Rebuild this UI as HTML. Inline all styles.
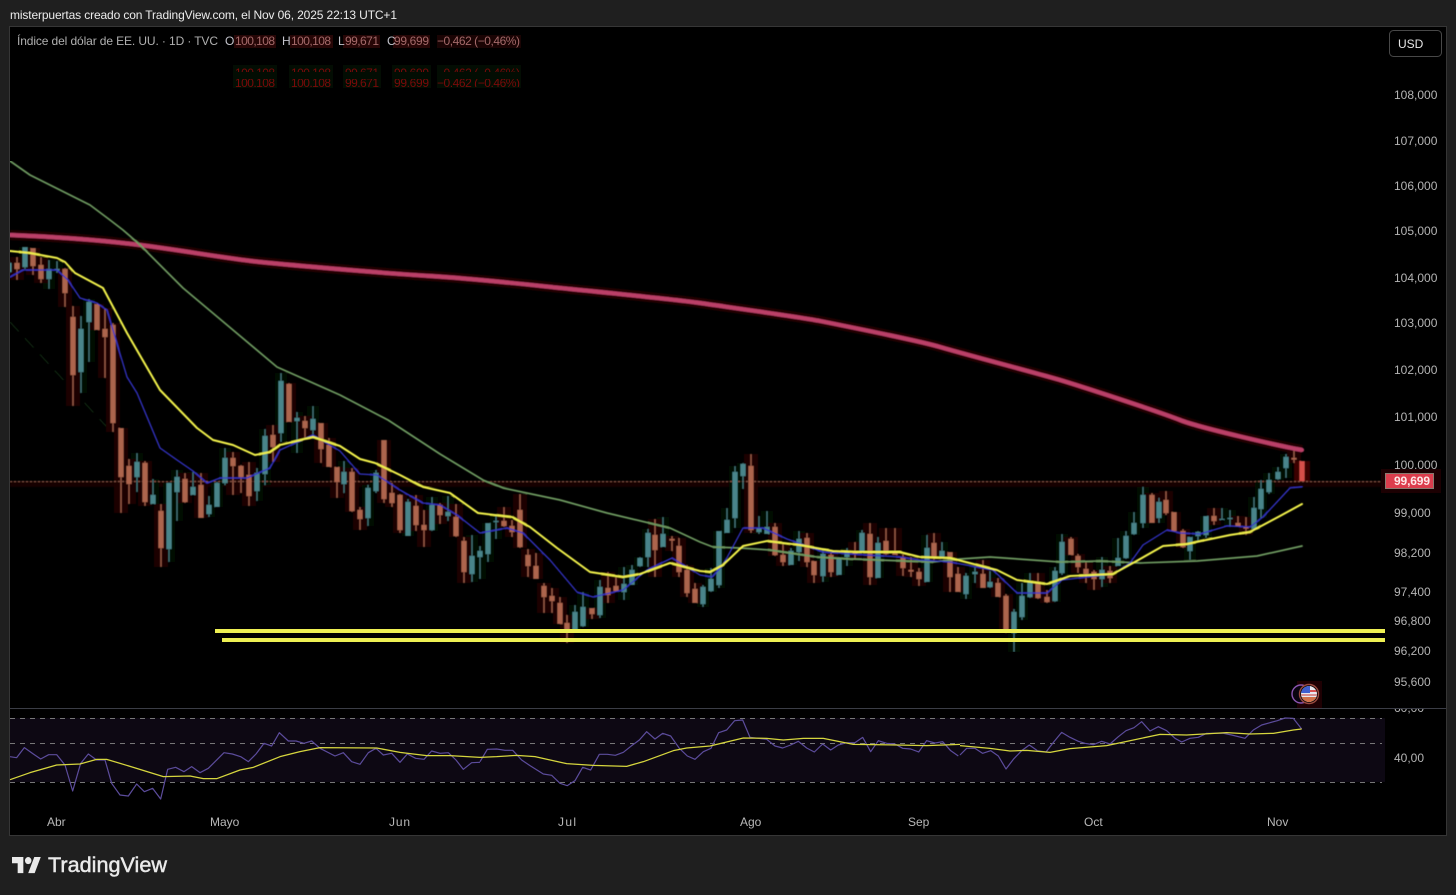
<!DOCTYPE html>
<html><head><meta charset="utf-8"><style>
html,body{margin:0;padding:0;background:#1f1f1f;width:1456px;height:895px;overflow:hidden}
svg{display:block}
text{font-family:"Liberation Sans",sans-serif;font-size:12px}
</style></head><body>
<svg width="1456" height="895" viewBox="0 0 1456 895" xmlns="http://www.w3.org/2000/svg">
<defs>
<filter id="soft" x="0" y="0" width="100%" height="100%" filterUnits="objectBoundingBox"><feGaussianBlur stdDeviation="0.45"/></filter>
<clipPath id="main"><rect x="10" y="27" width="1375" height="681"/></clipPath>
<clipPath id="g1"><rect x="230" y="64" width="300" height="8"/></clipPath>
<clipPath id="g2"><rect x="230" y="79" width="300" height="8"/></clipPath>
<clipPath id="rsiax"><rect x="1386" y="709" width="60" height="120"/></clipPath>
<clipPath id="flag"><circle cx="1309" cy="694" r="8"/></clipPath>
<path id="tw" d="M9 261V274M25 247V269M49 260V289M57 261V273M81 316V393M89 299V362M137 453V492M153 479V504M169 483V562M177 470V521M193 472V495M209 496V517M217 482V507M225 448V485M257 468V501M265 429V485M281 373V442M297 412V453M313 406V439M344 461V493M368 485V526M376 470V493M408 499V536M432 497V531M448 496V521M472 535V582M480 546V579M488 523V562M496 514V539M575 605V631M583 592V627M600 580V618M624 567V600M632 565V585M640 557V567M648 529V567M663 517V547M703 585V607M711 568V592M719 531V588M727 508V533M735 466V528M743 463V489M759 516V534M767 511V534M791 548V565M799 531V561M823 548V582M839 557V575M847 548V566M862 530V552M878 537V578M927 535V582M942 542V559M966 573V599M975 567V583M990 571V588M1014 609V652M1022 583V620M1030 573V598M1055 567V602M1062 534V575M1102 557V587M1118 538V566M1126 531V559M1134 512V535M1143 487V528M1159 498V523M1190 537V560M1198 531V542M1206 516V538M1222 508V520M1230 510V527M1254 497V530M1261 480V518M1269 473V494M1278 467V480M1286 454V478"/>
<path id="tb" d="M9 263V272M25 247V267M49 269V279M57 269V270.5M81 329V372M89 302V322M137 462V477M153 495V504M169 483V549M177 477V492M193 487V495M209 505V514M217 483V507M225 458V483M257 473V491M265 436V474M281 381V433M297 418V421M313 419V430M344 472V484M368 488V518M376 473V491M408 502V536M432 505V530M448 512V516M472 556V574M480 551V557M488 523V554M496 521V522M575 612V631M583 607V626M600 587V615M624 584V592M632 570V585M640 558V566M648 533V557M663 534V547M703 587V604M711 579V591M719 531V585M727 520V533M735 472V518M743 464V476M759 528V532M767 527V534M791 551V565M799 539V552M823 554V576M839 559V575M847 551V557M862 533V551M878 543V578M927 548V582M942 551V557M966 576V594M975 572V574M990 582V587M1014 612V633M1022 596V617M1030 582V597M1055 571V601M1062 542V573M1102 570V579M1118 558V566M1126 536V558M1134 523V534M1143 495V523M1159 502V518M1190 537V551M1198 532V536M1206 516V535M1222 519V520M1230 518V519M1254 508V529M1261 489V509M1269 480V492M1278 472V479M1286 457V468"/>
<path id="rw" d="M17 257V280M33 248V275M41 257V283M65 268V307M73 306V406M97 304V330M105 308V378M113 323V432M121 428V513M129 459V504M145 461V506M161 504V567M185 473V503M201 473V518M233 452V495M241 465V493M249 462V506M273 425V462M289 383V422M305 416V440M321 423V463M329 438V467M337 467V498M352 468V512M360 507V530M384 440V503M392 483V507M400 494V533M416 495V531M424 510V547M440 503V524M456 504V537M464 537V583M504 507V527M512 520V537M520 494V548M528 549V577M536 553V579M544 583V613M552 588V613M560 597V624M567 615V643M592 608V619M608 572V603M616 577V592M655 519V577M672 536V551M679 538V577M687 565V597M695 583V603M751 454V533M775 523V556M783 543V566M807 533V567M814 561V583M831 553V577M855 542V559M870 523V585M886 528V555M895 528V555M903 554V576M911 557V577M919 568V586M934 533V560M950 552V592M958 567V592M983 560V588M998 578V597M1006 594V633M1038 573V599M1047 590V603M1071 537V555M1078 554V573M1086 562V583M1094 570V590M1110 566V583M1152 493V523M1166 491V515M1174 512V532M1183 529V548M1214 508V525M1238 516V527M1246 517V535M1294 450V463"/>
<path id="rb" d="M17 263V269M33 248V266M41 265V279M65 269V293M73 317V375M97 304V330M105 329V337M113 325V423M121 428V477M129 466V484M145 463V502M161 511V548M185 479V502M201 485V518M233 458V466M241 466V477M249 475V496M273 435V447M289 384V422M305 421V428M321 423V449M329 445V467M337 467V482M352 472V511M360 510V519M384 440V499M392 493V503M400 495V530M416 506V525M424 525V530M440 505V515M456 517V536M464 541V572M504 521V526M512 526V532M520 510V547M528 555V566M536 566V579M544 586V597M552 596V601M560 603V624M567 623V631M592 608V614M608 588V595M616 586V591M655 535V550M672 539V540.5M679 546V572M687 570V593M695 589V603M751 466V530M775 527V555M783 555V562M807 538V562M814 561V575M831 555V572M855 552V553.5M870 534V577M886 541V554M895 552V555M903 557V568M911 570V571.5M919 572V579M934 543V557M950 552V577M958 574V592M983 574V588M998 583V597M1006 596V631M1038 582V598M1047 597V602M1071 539V555M1078 556V567M1086 569V574M1094 572V579M1110 571V578M1152 495V523M1166 500V513M1174 512V531M1183 531V547M1214 516V521M1238 523V526M1246 527V528.5M1294 458V459.5"/>
</defs>

<rect width="1456" height="895" fill="#1f1f1f"/>
<rect x="9.5" y="26.5" width="1437" height="809" fill="#000" stroke="#363636"/>

<text x="10" y="19" fill="#ececec" textLength="387" lengthAdjust="spacing">misterpuertas creado con TradingView.com, el Nov 06, 2025 22:13 UTC+1</text>

<!-- header values -->
<rect x="234" y="35" width="42" height="13" fill="#260606"/>
<rect x="290" y="35" width="43" height="13" fill="#260606"/>
<rect x="343" y="35" width="37" height="13" fill="#260606"/>
<rect x="393" y="35" width="37" height="13" fill="#260606"/>
<rect x="437" y="35" width="84" height="13" fill="#1a0404"/>
<text x="17" y="45" fill="#b0b0b0" textLength="201" lengthAdjust="spacing">Índice del dólar de EE. UU. · 1D · TVC</text>
<g fill="#c4c4cc"><text x="225" y="45">O</text><text x="282" y="45">H</text><text x="338" y="45">L</text><text x="387" y="45">C</text></g>
<g fill="#a46a6a"><text x="235" y="45" textLength="40" lengthAdjust="spacing">100,108</text><text x="291" y="45" textLength="40" lengthAdjust="spacing">100,108</text><text x="345" y="45" textLength="34" lengthAdjust="spacing">99,671</text><text x="394" y="45" textLength="35" lengthAdjust="spacing">99,699</text><text x="437" y="45" textLength="83" lengthAdjust="spacing">−0,462 (−0,46%)</text></g>

<!-- ghost rows -->
<rect x="233" y="65" width="44" height="23" fill="#030d03"/><rect x="289" y="65" width="44" height="23" fill="#030d03"/><rect x="343" y="65" width="38" height="23" fill="#030d03"/><rect x="392" y="65" width="39" height="23" fill="#030d03"/><rect x="437" y="65" width="84" height="23" fill="#030d03"/>
<g clip-path="url(#g1)" fill="#7a0a0a"><text x="235" y="77" textLength="40" lengthAdjust="spacing">100,108</text><text x="291" y="77" textLength="40" lengthAdjust="spacing">100,108</text><text x="345" y="77" textLength="34" lengthAdjust="spacing">99,671</text><text x="394" y="77" textLength="35" lengthAdjust="spacing">99,699</text><text x="437" y="77" textLength="83" lengthAdjust="spacing">−0,462 (−0,46%)</text></g>
<g clip-path="url(#g2)" fill="#7a0a0a"><text x="235" y="87" textLength="40" lengthAdjust="spacing">100,108</text><text x="291" y="87" textLength="40" lengthAdjust="spacing">100,108</text><text x="345" y="87" textLength="34" lengthAdjust="spacing">99,671</text><text x="394" y="87" textLength="35" lengthAdjust="spacing">99,699</text><text x="437" y="87" textLength="83" lengthAdjust="spacing">−0,462 (−0,46%)</text></g>

<g clip-path="url(#main)">
<g filter="url(#soft)">
<!-- faint diagonal -->
<path d="M10 322L117 438" stroke="#0a240e" stroke-width="1.3" stroke-dasharray="13 9" fill="none"/>
<!-- price line haze -->
<rect x="10" y="481" width="1375" height="6" fill="#120202"/>
<!-- halos -->
<use href="#tw" fill="none" stroke="#001006" stroke-width="12"/>
<use href="#rw" fill="none" stroke="#1e0000" stroke-width="14"/>
<path d="M1302 461V482" stroke="#3a0000" stroke-width="16" fill="none"/>
<!-- MA200 halo -->
<path d="M10 235C60 237 100 240 140 245S230 259 260 262S380 273 430 276S540 286 570 289S680 300 700 303S800 317 820 321S920 341 940 347S1040 374 1060 380S1160 412 1180 420S1280 446 1302 450" fill="none" stroke="#240006" stroke-width="10"/>
<!-- price dotted -->
<path d="M10 481.5H1385" stroke="#8a5344" stroke-width="1" stroke-dasharray="2 2" fill="none"/>
<!-- candles -->
<use href="#tw" fill="none" stroke="#447378" stroke-width="1.2"/>
<use href="#rw" fill="none" stroke="#9c5c4a" stroke-width="1.2"/>
<use href="#tb" fill="none" stroke="#4a858a" stroke-width="5"/>
<use href="#rb" fill="none" stroke="#ad654d" stroke-width="5"/>
<path d="M1302 461V481" stroke="#d8504a" stroke-width="5" fill="none"/>
<!-- MAs -->
<g fill="none" stroke-linejoin="round" stroke-linecap="round">
<path d="M10 235C60 237 100 240 140 245S230 259 260 262S380 273 430 276S540 286 570 289S680 300 700 303S800 317 820 321S920 341 940 347S1040 374 1060 380S1160 412 1180 420S1280 446 1302 450" stroke="#bb4068" stroke-width="4.2"/>
<path d="M10 161L30 175L60 190L90 205L110 220L123 230L138 243L183 288L233 330L277 367L340 395L388 420L440 454L483 480L503 488L560 500L607 513L670 528L700 542L713 547L740 548L770 550L817 557L850 559L933 562L960 559L990 557L1060 562L1100 561L1140 563L1197 561L1257 556L1302 546" stroke="#6f9c62" stroke-width="1.7"/>
<path d="M10 277L23 270L57 270L68 280L80 298L97 303L107 310L127 377L137 393L160 448L177 460L193 471L207 483L220 478L247 478L270 468L280 450L300 441L313 435L340 451L360 474L377 475L400 490L423 503L440 505L457 515L480 533L507 528L523 533L550 560L577 592L593 597L623 590L647 570L672 558L700 575L712 577L723 565L743 528L763 528L787 539L823 552L867 555L900 557L920 560L950 562L993 570L1017 593L1047 593L1062 580L1113 574L1130 563L1143 545L1167 530L1180 533L1200 534L1227 526L1250 527L1263 517L1290 488L1302 487" stroke="#3434c8" stroke-width="1.3"/>
<path d="M10 251L30 253L57 258L65 262L75 273L103 288L127 333L160 390L197 428L213 440L233 445L255 455L270 452L280 445L313 437L340 446L360 459L375 463L400 475L423 487L450 493L478 513L512 517L530 527L557 548L590 572L623 577L640 574L670 563L700 571L710 572L723 565L743 546L767 541L800 545L833 551L857 552L900 552L920 557L950 558L997 570L1017 580L1047 584L1070 576L1093 575L1113 574L1133 563L1163 546L1187 544L1230 535L1250 532L1280 516L1302 504" stroke="#f3f34c" stroke-width="2"/>
</g>
</g>
<!-- horizontal levels -->
<rect x="215" y="629" width="1170" height="4" fill="#eef053"/>
<rect x="222" y="638" width="1163" height="4" fill="#eef053"/>
<!-- event icons -->
<rect x="1297" y="681" width="25" height="27" fill="#1e0003"/>
<circle cx="1301" cy="694" r="9" fill="#0a0410" stroke="#8a55b0" stroke-width="1.4"/>
<circle cx="1309" cy="694" r="9.5" fill="#000" stroke="#9a4a40" stroke-width="1.4"/>
<g clip-path="url(#flag)">
<rect x="1300" y="685" width="18" height="18" fill="#e8e8ef"/>
<rect x="1300" y="697" width="18" height="6" fill="#d07048"/>
<rect x="1308" y="690" width="10" height="2" fill="#d85050"/>
<rect x="1301" y="694" width="17" height="2" fill="#d89090"/>
<rect x="1300" y="685" width="10" height="8" fill="#3f5fd0"/>
</g>
</g>

<!-- RSI pane -->
<path d="M10 708.5H1446" stroke="#3b3d46" stroke-width="1"/>
<rect x="10" y="718" width="1375" height="64" fill="#0d0813"/>
<path d="M10 718.5H1382M10 743.5H1382M10 782.5H1382" stroke="#8b8b8b" stroke-width="1" stroke-dasharray="5 5" fill="none" opacity=".85"/>
<g fill="none" stroke-linejoin="round">
<g transform="translate(0 680) scale(.33333)" stroke="#5c4c9c" stroke-width="3.6">
<path d="M30 230L50 233L73 203L100 222L122 237L146 224L170 224L195 255L218 333L242 250L265 222L290 240L315 240L335 310L360 345L385 348L410 312L433 335L458 325L482 357L503 268L527 262L552 275L575 260L600 278L625 265L672 218L697 222L722 230L745 245L768 222L792 190L815 198L838 158L865 183L888 183L912 190L935 183L960 205L1005 228L1030 218L1055 245L1080 253L1105 218L1128 205L1150 225L1175 220L1200 247L1222 222L1247 235L1272 238L1295 213L1320 220L1345 218L1368 240L1390 268L1415 248L1440 247"/>
</g>
<g transform="translate(480 680) scale(.33333)" stroke="#5c4c9c" stroke-width="3.6">
<path d="M0 245L22 208L50 207L75 211L98 211L125 240L150 257L190 282L215 286L240 310L262 317L285 302L308 262L332 270L358 223L382 223L406 226L430 217L455 197L478 180L500 155L525 177L548 160L572 168L598 205L622 228L645 238L670 215L693 205L716 158L740 150L764 122L788 120L810 172L860 178L885 198L908 204L932 195L955 184L980 204L1003 216L1028 192L1052 210L1075 195L1100 188L1125 188L1148 172L1172 215L1195 182L1220 190L1245 192L1268 205L1292 207L1316 216L1340 182L1365 189L1388 185L1412 212L1435 228"/>
</g>
<g transform="translate(960 680) scale(.33333)" stroke="#5c4c9c" stroke-width="3.6">
<path d="M0 225L20 205L45 205L68 220L92 212L115 228L138 267L160 238L185 212L208 195L232 212L258 216L282 185L305 157L330 172L355 184L375 190L400 194L425 184L450 192L475 170L498 152L522 143L545 125L570 153L595 140L620 152L645 175L665 186L690 175L715 172L740 160L790 160L815 165L855 175L880 150L905 135L930 128L952 122L975 114L1000 115L1025 147"/>
</g>
<g transform="translate(0 680) scale(.33333)" stroke="#d6d63e" stroke-width="3.8">
<path d="M30 299L90 278L170 255L240 252L290 238L320 238L400 262L490 290L570 288L610 296L650 296L720 270L760 262L840 230L900 215L960 203L1130 204L1200 217L1280 227L1350 227L1440 232"/>
</g>
<g transform="translate(480 680) scale(.33333)" stroke="#d6d63e" stroke-width="3.8">
<path d="M0 232L50 230L110 226L165 230L260 251L340 256L440 259L490 245L580 212L620 204L690 198L740 186L790 174L860 175L910 180L970 175L1030 175L1120 193L1250 195L1340 197L1440 193"/>
</g>
<g transform="translate(960 680) scale(.33333)" stroke="#d6d63e" stroke-width="3.8">
<path d="M0 197L90 205L150 213L200 211L270 217L330 206L440 197L600 163L680 165L800 158L870 162L940 160L1000 150L1025 147"/>
</g>
</g>

<!-- price labels -->
<g fill="#b4b4b4">
<text x="1394" y="99">108,000</text><text x="1394" y="145">107,000</text><text x="1394" y="190">106,000</text><text x="1394" y="235">105,000</text><text x="1394" y="282">104,000</text><text x="1394" y="327">103,000</text><text x="1394" y="374">102,000</text><text x="1394" y="421">101,000</text><text x="1394" y="469">100,000</text><text x="1394" y="517">99,000</text><text x="1394" y="557">98,200</text><text x="1394" y="596">97,400</text><text x="1394" y="625">96,800</text><text x="1394" y="655">96,200</text><text x="1394" y="686">95,600</text>
<g clip-path="url(#rsiax)"><text x="1394" y="712">60,00</text></g>
<text x="1394" y="762">40,00</text>
</g>
<rect x="1381" y="469" width="60" height="24" fill="#1c0002"/>
<rect x="1385.5" y="473.5" width="48" height="15" fill="#dc3d4d" stroke="#8a7a70"/>
<text x="1394" y="485" fill="#ffe8e8" font-weight="bold" textLength="36" lengthAdjust="spacing">99,699</text>

<!-- USD -->
<rect x="1389.5" y="30.5" width="52" height="26" rx="4" fill="#000" stroke="#484848"/>
<text x="1398" y="48" fill="#e6e6e6">USD</text>

<!-- time labels -->
<g fill="#b8b8b8">
<text x="47" y="826">Abr</text><text x="210" y="826">Mayo</text><text x="389" y="826" textLength="21" lengthAdjust="spacing">Jun</text><text x="558" y="826" textLength="18" lengthAdjust="spacing">Jul</text><text x="740" y="826">Ago</text><text x="908" y="826">Sep</text><text x="1084" y="826">Oct</text><text x="1267" y="826">Nov</text>
</g>

<!-- logo -->
<g transform="translate(12 853.5) scale(.81 .89)" fill="#eaeaea">
<path d="M14 22H7V11H0V4h14v18zM28 22h-8l7.5-18h8L28 22z"/><circle cx="20" cy="8" r="4"/>
</g>
<text x="48" y="872" fill="#eaeaea" stroke="#eaeaea" stroke-width=".45" style="font-size:21px" textLength="119" lengthAdjust="spacingAndGlyphs">TradingView</text>
</svg>
</body></html>
